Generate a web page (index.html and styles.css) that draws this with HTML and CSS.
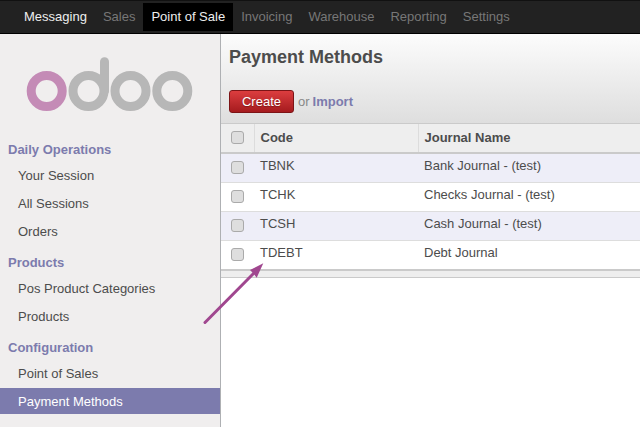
FILE: index.html
```html
<!DOCTYPE html>
<html lang="en">

<head>
    <meta charset="UTF-8">
    <title>Payment Methods</title>
    <link rel="stylesheet" href="styles.css">
</head>

<body>
    <header class="topbar">
        <nav class="topmenu">
            <a class="on">Messaging</a>
            <a>Sales</a>
            <a class="valgt">Point of Sale</a>
            <a>Invoicing</a>
            <a>Warehouse</a>
            <a>Reporting</a>
            <a>Settings</a>
        </nav>
    </header>
    <div class="main">
        <aside class="sidebar">
            <div class="logo">
                <svg width="168" height="56" viewBox="0 0 168 56">
                    <circle cx="20.700" cy="36" r="15.500" fill="none" stroke="#c48bb6" stroke-width="9" />
                    <circle cx="62.500" cy="36" r="15.500" fill="none" stroke="#b7b7b7" stroke-width="9" />
                    <path d="M78.500 36V6.800" fill="none" stroke="#b7b7b7" stroke-width="9" stroke-linecap="round" />
                    <circle cx="104.500" cy="36" r="15.500" fill="none" stroke="#b7b7b7" stroke-width="9" />
                    <circle cx="146.300" cy="36" r="15.500" fill="none" stroke="#b7b7b7" stroke-width="9" />
                </svg>
            </div>
            <h3>Daily Operations</h3>
            <a class="item">Your Session</a>
            <a class="item">All Sessions</a>
            <a class="item">Orders</a>
            <h3>Products</h3>
            <a class="item">Pos Product Categories</a>
            <a class="item">Products</a>
            <h3>Configuration</h3>
            <a class="item">Point of Sales</a>
            <a class="item aktiv">Payment Methods</a>
        </aside>
        <section class="content">
            <div class="head">
                <h1>Payment Methods</h1>
                <div class="actions">
                    <button class="create">Create</button>
                    <span class="or">or</span>
                    <a class="import">Import</a>
                </div>
            </div>
            <table>
                <thead>
                    <tr>
                        <th class="check"><span class="box"></span></th>
                        <th class="code">Code</th>
                        <th>Journal Name</th>
                    </tr>
                </thead>
                <tbody>
                    <tr class="odd">
                        <td class="check"><span class="box"></span></td>
                        <td>TBNK</td>
                        <td>Bank Journal - (test)</td>
                    </tr>
                    <tr>
                        <td class="check"><span class="box"></span></td>
                        <td>TCHK</td>
                        <td>Checks Journal - (test)</td>
                    </tr>
                    <tr class="odd">
                        <td class="check"><span class="box"></span></td>
                        <td>TCSH</td>
                        <td>Cash Journal - (test)</td>
                    </tr>
                    <tr class="last">
                        <td class="check"><span class="box"></span></td>
                        <td>TDEBT</td>
                        <td>Debt Journal</td>
                    </tr>
                </tbody>
            </table>
            <div class="tfoot"></div>
        </section>
    </div>
    <svg class="arrow" width="70" height="70" viewBox="0 0 70 70">
        <path d="M5 62.500L54 13" fill="none" stroke="#a0478f" stroke-width="3" stroke-linecap="round" />
        <path d="M63.300 3.300L56.700 17.700L53.500 13.500L50 10Z" fill="#a0478f" />
    </svg>
</body>

</html>
```

FILE: styles.css
```css
* {
    box-sizing: border-box;
}

html,
body {
    margin: 0;
    height: 100%;
    overflow: hidden;
}

body {
    font-family: "Liberation Sans", Arial, sans-serif;
    font-size: 13px;
    color: #4c4c4c;
    background-color: white;
}

.topbar {
    height: 34px;
    background-color: #222;
    border-top: 1px solid #111;
    border-bottom: 1px solid #000;
}

.topmenu {
    display: flex;
    padding: 2px 0 0 16px;
}

.topmenu a {
    height: 28px;
    line-height: 27px;
    padding: 0 8px;
    color: #777;
}

.topmenu .on {
    color: #eee;
}

.topmenu .valgt {
    background-color: #000;
    color: #eee;
}

.main {
    display: flex;
    height: 393px;
}

.sidebar {
    display: flex;
    flex-direction: column;
    width: 221px;
    flex: none;
    background-color: #f0eeee;
    border-right: 1px solid #aeb0b3;
}

.logo {
    height: 98px;
    padding: 21px 0 0 26px;
}

.logo svg {
    display: block;
}

.sidebar h3 {
    margin: 0;
    height: 29px;
    line-height: 16px;
    padding: 10px 0 0 8px;
    font-size: 13px;
    color: #7c7bad;
}

.item {
    height: 26px;
    line-height: 28px;
    margin: 1px 0;
    padding-left: 18px;
    color: #4c4c4c;
}

.aktiv {
    background-color: #7c7bad;
    color: white;
}

.content {
    flex: 1;
}

.head {
    height: 90px;
    padding: 12px 8px 0;
    background: linear-gradient(#fcfcfc, #dedede);
    border-bottom: 1px solid #cacaca;
}

.head h1 {
    margin: 0;
    font-size: 18px;
    line-height: 22px;
    color: #4c4c4c;
}

.actions {
    display: flex;
    align-items: center;
    margin-top: 22px;
}

.create {
    height: 23px;
    width: 65px;
    padding: 0;
    margin-right: 4px;
    font: inherit;
    color: white;
    text-shadow: 0 1px 1px rgba(0, 0, 0, 0.3);
    background: linear-gradient(#dc3d3f, #a51b1e);
    border: 1px solid #7c1416;
    border-radius: 3px;
}

.or {
    color: #888;
}

.import {
    margin-left: 3px;
    font-weight: bold;
    color: #7c7bad;
}

table {
    width: 100%;
    border-collapse: collapse;
    table-layout: fixed;
}

th {
    height: 29px;
    text-align: left;
    padding: 0 6px 1px;
    background-color: #eee;
    border-bottom: 2px solid #cacaca;
    border-left: 1px solid #dcdcdc;
}

.check {
    width: 33px;
    padding: 0 0 0 10px;
}

th.check {
    padding-bottom: 1px;
    border-left: 0;
}

.code {
    width: 164px;
}

td {
    height: 29px;
    padding: 0 6px 4px;
    border-bottom: 1px solid #ddd;
}

.odd td {
    background-color: #eeeef8;
}

.last td {
    border-bottom: 0;
}

.box {
    display: block;
    width: 13px;
    height: 13px;
    background-color: #dedede;
    border: 1px solid #aaa;
    border-radius: 3px;
}

.tfoot {
    height: 9px;
    background-color: #eee;
    border-top: 2px solid #cacaca;
    border-bottom: 1px solid #cacaca;
}

.arrow {
    position: absolute;
    left: 200px;
    top: 260px;
}
```
